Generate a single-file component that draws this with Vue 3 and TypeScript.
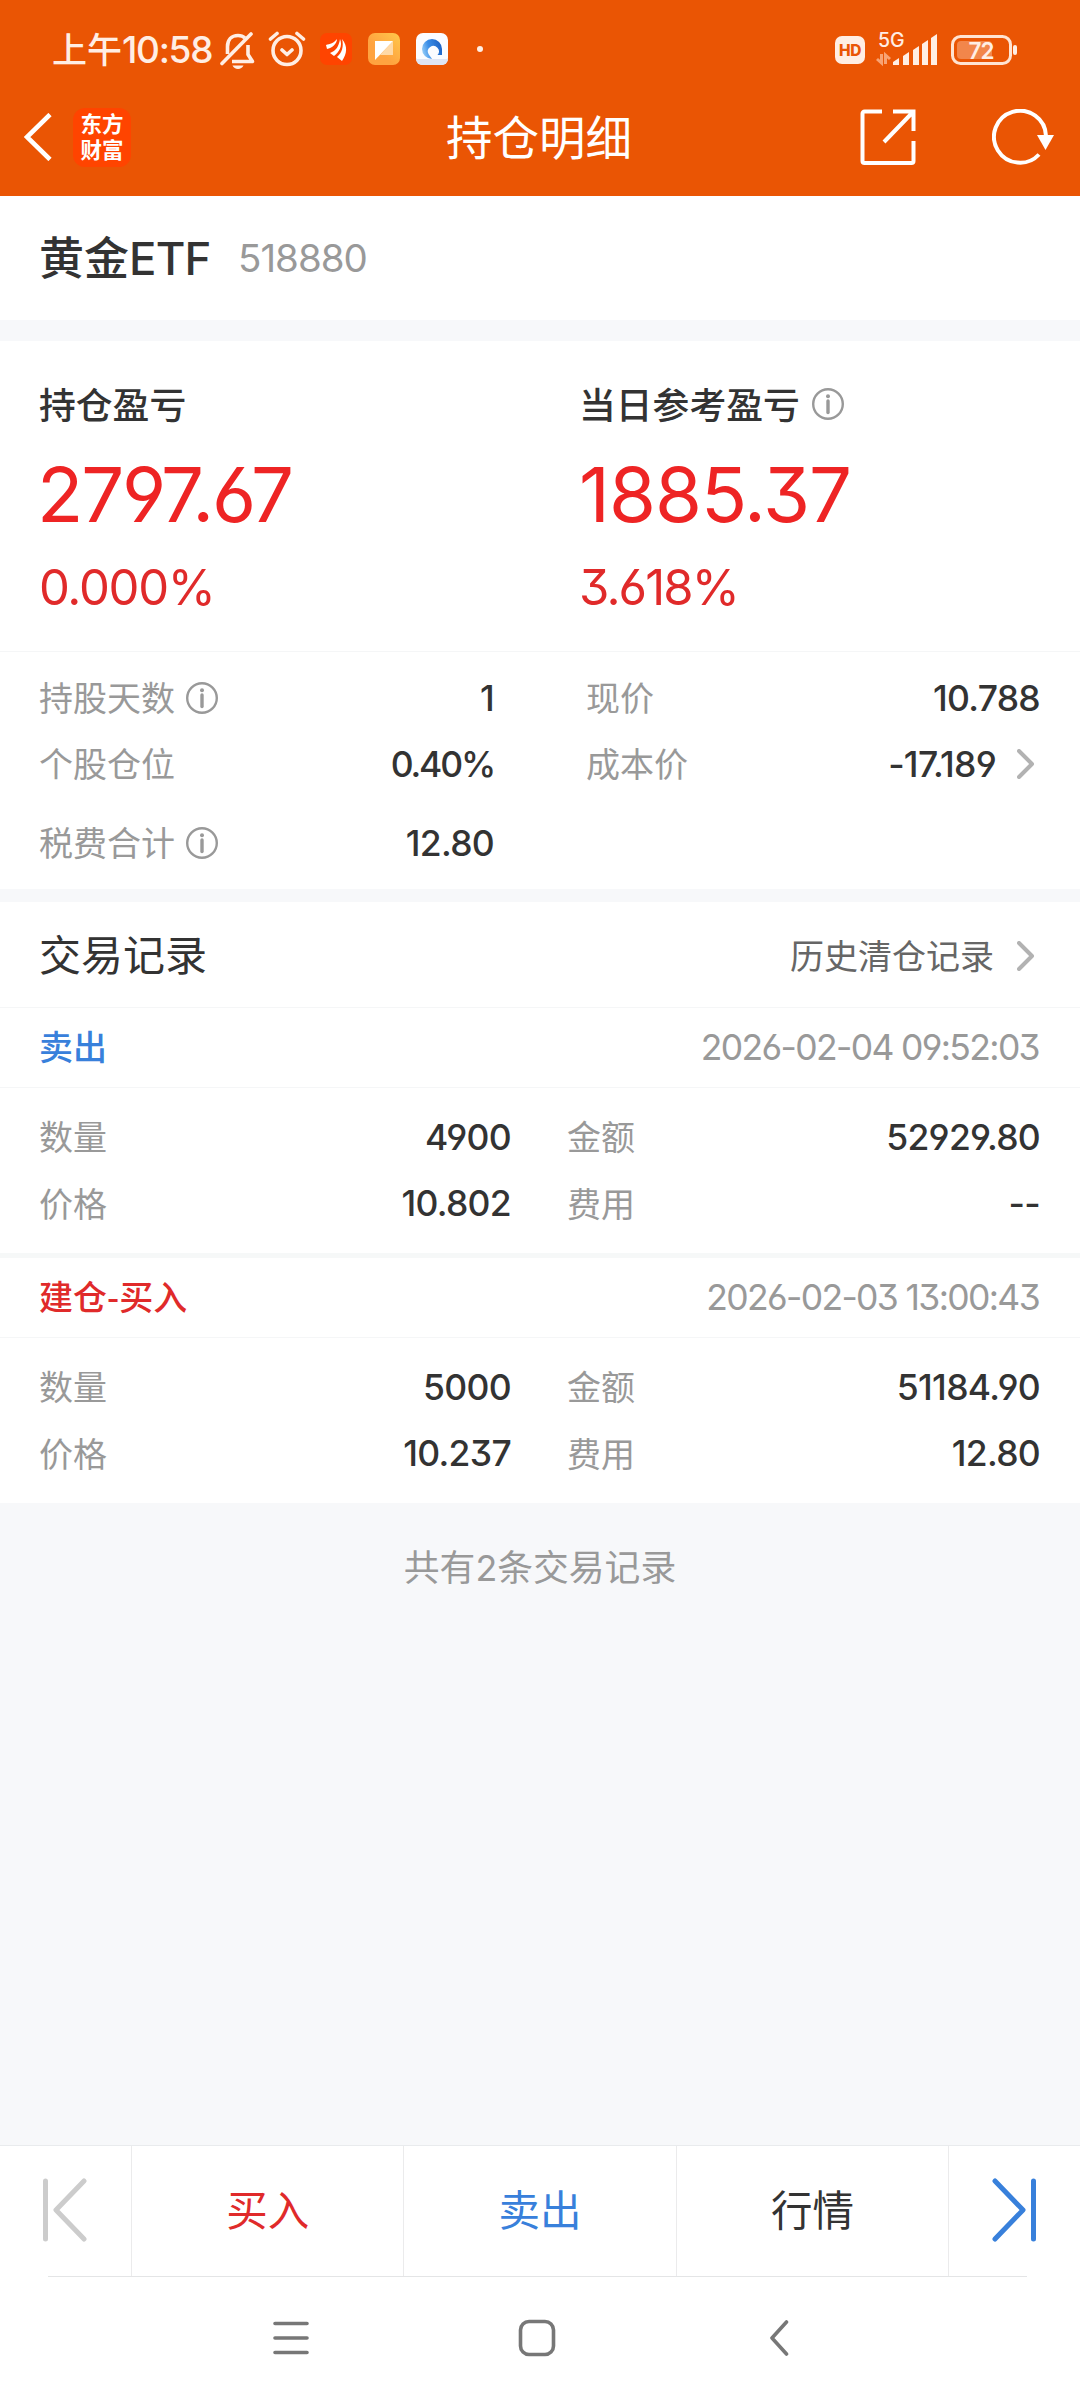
<script setup lang="ts">
interface Trade {
  kind: 'sell' | 'buy'
  title: string
  time: string
  quantity: string
  amount: string
  price: string
  fee: string
}

const trades: Trade[] = [
  { kind: 'sell', title: '卖出', time: '2026-02-04 09:52:03', quantity: '4900', amount: '52929.80', price: '10.802', fee: '--' },
  { kind: 'buy', title: '建仓-买入', time: '2026-02-03 13:00:43', quantity: '5000', amount: '51184.90', price: '10.237', fee: '12.80' },
]
</script>

<template>
  <div class="screen">
    <header class="top">
      <div class="status">
        <span class="clock">上午<span class="clock-num">10:58</span></span>
        <svg class="bell" width="36" height="38" viewBox="0 0 36 38" fill="none" stroke="#ffeee4" stroke-width="3.6">
          <path d="M7.500 22V14.500C7.500 8 11.500 3.500 18 3.500c3 0 5.400 1 7 2.500M28 13v9.500l4.500 7H12" stroke-linejoin="round" />
          <path d="M2 31.500L31 2" stroke-linecap="round" />
          <path d="M12.500 33.500h11c-1 2.300-3 3.500-5.500 3.500s-4.500-1.200-5.500-3.500z" fill="#ffeee4" stroke="none" />
        </svg>
        <svg class="alarm" width="38" height="38" viewBox="0 0 38 38" fill="none" stroke="#ffeee4" stroke-width="3.600" stroke-linecap="round" stroke-linejoin="round">
          <circle cx="19" cy="20.500" r="14" />
          <path d="M14 20l5 4.500 5-4.500M2.500 9L9 3.500M35.500 9L29 3.500" />
        </svg>
        <svg class="app" width="32" height="32" viewBox="0 0 32 32">
          <rect width="32" height="32" rx="7" fill="#ff4400" />
          <path d="M6 12c4-1 8-2 11-6 0 5-5 9-10 10zM10 20c6-2 9-7 10-14 3 7-1 13-6 17zM17 24c5-4 7-11 5-18 6 7 5 15 0 22z" fill="#fff" />
        </svg>
        <svg class="app" width="32" height="32" viewBox="0 0 32 32">
          <defs>
            <linearGradient id="note" x1="0" y1="1" x2="1" y2="0">
              <stop offset="0.400" stop-color="#ffa340" />
              <stop offset="1" stop-color="#ffc84a" />
            </linearGradient>
          </defs>
          <rect width="32" height="32" rx="7" fill="url(#note)" />
          <path d="M25 8v14H12z" fill="#ffd9a6" />
          <path d="M7 8h18L7 27z" fill="#fff" />
        </svg>
        <svg class="app" width="32" height="32" viewBox="0 0 32 32">
          <defs>
            <linearGradient id="ring" x1="0" y1="0.700" x2="1" y2="0.400">
              <stop offset="0" stop-color="#9ad0f8" />
              <stop offset="0.400" stop-color="#3b8ee8" />
              <stop offset="1" stop-color="#1d62c4" />
            </linearGradient>
          </defs>
          <rect width="32" height="32" rx="7" fill="#fbfcff" />
          <path d="M0 26h32a6 6 0 0 1-6 6H6a6 6 0 0 1-6-6z" fill="#dfe5f4" />
          <path d="M16 26A10 10 0 1 1 26 16v6h-4.500a5.500 5.500 0 1 0-9-1c1 2 2.500 3 3.500 5z" fill="url(#ring)" />
        </svg>
        <i class="dot"></i>
        <span class="hd">HD</span>
        <svg class="signal" width="64" height="36" viewBox="0 0 64 36">
          <text x="3" y="16" class="net">5G</text>
          <g fill="none" stroke="#f8a373" stroke-width="3">
            <path d="M6.500 23v9L2 28M10.500 33v-9l4.500 4" />
          </g>
          <path d="M18 34v-3l6-4v7zM28 34V25l6-4v13zM38 34V19l6-4v19zM47 34V13l6-4v25zM56 34V7l6-4v31z" fill="#ffeee4" />
        </svg>
        <svg class="battery" width="68" height="30" viewBox="0 0 68 30">
          <rect x="1.500" y="1.500" width="58" height="27" rx="8" fill="none" stroke="#ffe3d1" stroke-width="3" />
          <rect x="6" y="6" width="35" height="18" rx="4" fill="#f2864b" />
          <rect x="62" y="10" width="4" height="10" rx="2" fill="#ffeee4" />
          <text x="30" y="23.500" text-anchor="middle" class="level">72</text>
        </svg>
      </div>
      <div class="nav">
        <svg class="back" width="28" height="48" viewBox="0 0 28 48" fill="none" stroke="#fff" stroke-width="4.600">
          <path d="M26 1.500L3 24l23 22.500" />
        </svg>
        <div class="logo"><span>东方</span><span>财富</span></div>
        <h1>持仓明细</h1>
        <svg class="share" width="56" height="56" viewBox="0 0 56 56" fill="none" stroke="#fff" stroke-width="4">
          <path d="M22 2.500H4.500a2 2 0 0 0-2 2V52a2 2 0 0 0 2 2h47a2 2 0 0 0 2-2V32M33 2.500h20.500V22M53 3L24 33" />
        </svg>
        <svg class="refresh" width="62" height="56" viewBox="0 0 62 56" fill="none" stroke="#fff" stroke-width="4">
          <path d="M54 27A26 26 0 1 0 47 45.500" />
          <path d="M45 26h17l-8.500 15z" fill="#fff" stroke="none" />
        </svg>
      </div>
    </header>

    <section class="stock">
      <span class="name">黄金<span class="num">ETF</span></span>
      <span class="code num">518880</span>
    </section>

    <section class="profit">
      <div class="cell">
        <div class="caption">持仓盈亏</div>
        <div class="big num tight">2797.67</div>
        <div class="pct num">0.000%</div>
      </div>
      <div class="cell">
        <div class="caption">
          当日参考盈亏
          <svg class="info" width="32" height="32" viewBox="0 0 32 32"><circle cx="16" cy="16" r="14.800" /><circle class="pt" cx="16" cy="8.200" r="2" /><path d="M16 13v11.500" /></svg>
        </div>
        <div class="big num">1885.37</div>
        <div class="pct num day">3.618%</div>
      </div>
    </section>

    <section class="facts">
      <div class="col left">
        <div class="row">
          <label>持股天数</label>
          <svg class="info" width="32" height="32" viewBox="0 0 32 32"><circle cx="16" cy="16" r="14.800" /><circle class="pt" cx="16" cy="8.200" r="2" /><path d="M16 13v11.500" /></svg>
          <b class="num">1</b>
        </div>
        <div class="row"><label>个股仓位</label><b class="num ratio">0.40%</b></div>
        <div class="row last">
          <label>税费合计</label>
          <svg class="info" width="32" height="32" viewBox="0 0 32 32"><circle cx="16" cy="16" r="14.800" /><circle class="pt" cx="16" cy="8.200" r="2" /><path d="M16 13v11.500" /></svg>
          <b class="num">12.80</b>
        </div>
      </div>
      <div class="col right">
        <div class="row"><label>现价</label><b class="num">10.788</b></div>
        <div class="row">
          <label>成本价</label><b class="num">-17.189</b>
          <svg class="more" width="18" height="30" viewBox="0 0 18 30"><path d="M2 2l13 13L2 28" /></svg>
        </div>
      </div>
    </section>

    <section class="records">
      <div class="head">
        <h2>交易记录</h2>
        <a>历史清仓记录</a>
        <svg class="more" width="18" height="30" viewBox="0 0 18 30"><path d="M2 2l13 13L2 28" /></svg>
      </div>
      <article v-for="t in trades" :key="t.time">
        <div class="trade-title" :class="t.kind">
          <strong>{{ t.title }}</strong>
          <time class="num">{{ t.time }}</time>
        </div>
        <div class="grid">
          <div class="row"><label>数量</label><b class="num">{{ t.quantity }}</b></div>
          <div class="row"><label>金额</label><b class="num">{{ t.amount }}</b></div>
          <div class="row"><label>价格</label><b class="num">{{ t.price }}</b></div>
          <div class="row"><label>费用</label><b class="num">{{ t.fee }}</b></div>
        </div>
      </article>
    </section>

    <p class="total">共有<span class="num">2</span>条交易记录</p>

    <footer>
      <div class="actions">
        <div class="edge">
          <svg width="44" height="64" viewBox="0 0 44 64" stroke="#ccc"><path d="M2.500 3v58M41 3L13 32l28 29" /></svg>
        </div>
        <div class="act buy">买入</div>
        <div class="act sell">卖出</div>
        <div class="act">行情</div>
        <div class="edge end">
          <svg width="44" height="64" viewBox="0 0 44 64" stroke="#3880db"><path d="M41.500 3v58M3 3l28 29L3 61" /></svg>
        </div>
      </div>
      <div class="system">
        <svg width="36" height="36" viewBox="0 0 36 36"><path d="M2 3.500h32M2 18h32M2 32.500h32" /></svg>
        <svg width="38" height="38" viewBox="0 0 38 38"><rect x="2.500" y="2.500" width="33" height="33" rx="8.500" /></svg>
        <svg width="20" height="36" viewBox="0 0 20 36"><path d="M17.500 2L3 18l14.500 16" /></svg>
      </div>
    </footer>
  </div>
</template>

<style>
body {
  margin: 0;
  background: #f7f8fa;
}
</style>

<style scoped>
.screen {
  width: 1080px;
  height: 2400px;
  display: flex;
  flex-direction: column;
  background: #f7f8fa;
  color: #333;
  font-family: "Noto Sans CJK SC", sans-serif;
  overflow: hidden;
}
.screen svg {
  display: block;
  flex: none;
}
.num {
  font-family: Inter, "Noto Sans CJK SC", sans-serif;
  font-feature-settings: "cv03", "cv04", "cv09";
  white-space: nowrap;
}
.top {
  height: 196px;
  flex: none;
  background: #ea5504;
  color: #fff;
}
.status {
  height: 98px;
  display: flex;
  align-items: center;
}
.clock {
  width: 168px;
  margin-left: 52px;
  font-size: 35px;
  font-weight: 500;
  line-height: 50px;
  color: #ffeee4;
  white-space: nowrap;
}
.clock-num {
  font-family: Inter, sans-serif;
  font-size: 37px;
  letter-spacing: -1.300px;
}
.bell { margin-top: 3px; }
.alarm { margin-left: 12px; }
.app { margin-left: 16px; }
.alarm + .app { margin-left: 14px; }
.dot {
  width: 6px;
  height: 6px;
  margin-left: 29px;
  border-radius: 50%;
  background: #ffeee4;
}
.hd {
  width: 30px;
  height: 28px;
  margin: 2px 0 0 352px;
  border-radius: 7px;
  background: #ffeee4;
  color: #ea5504;
  font: 800 15.500px/29px Inter, sans-serif;
  text-align: center;
  letter-spacing: -0.300px;
}
.signal {
  margin-left: 10px;
  overflow: visible;
}
.net {
  font: 500 19.500px Inter, sans-serif;
  fill: #ffeee4;
}
.battery { margin: 2px 0 0 12px; }
.level {
  font: 600 22.500px Inter, sans-serif;
  fill: #ffeee4;
  letter-spacing: -1px;
}
.nav {
  height: 78px;
  display: flex;
  align-items: center;
}
.back { margin-left: 24px; }
.logo {
  width: 58px;
  height: 59px;
  margin-left: 21px;
  padding-bottom: 2px;
  box-sizing: border-box;
  display: flex;
  flex-direction: column;
  justify-content: center;
  align-items: center;
  border-radius: 12px;
  background: #ff4400;
  font-size: 21.500px;
  line-height: 26px;
  font-weight: 700;
}
h1 {
  margin: 0 0 0 315px;
  width: 414px;
  padding-bottom: 5px;
  font-size: 46.500px;
  font-weight: 400;
  line-height: 60px;
}
.refresh { margin-left: 76px; }
.stock {
  height: 124px;
  flex: none;
  display: flex;
  align-items: center;
  padding-left: 39px;
  background: #fff;
}
.name {
  width: 199px;
  padding-bottom: 2px;
  font-size: 45px;
  font-weight: 500;
  line-height: 60px;
}
.name .num {
  font-size: 45.500px;
  letter-spacing: -0.800px;
}
.code {
  font-size: 38.500px;
  letter-spacing: -1px;
  line-height: 60px;
  color: #999;
}
.profit {
  height: 310px;
  flex: none;
  display: flex;
  margin-top: 21px;
  border-bottom: 1px solid #f5f6f7;
  background: #fff;
}
.cell {
  width: 540px;
  box-sizing: border-box;
  padding: 38px 0 0 39px;
}
.caption {
  height: 50px;
  box-sizing: border-box;
  padding-bottom: 3px;
  display: flex;
  align-items: center;
  gap: 12px;
  font-size: 36.800px;
  font-weight: 500;
}
.caption .info { margin-top: 3px; }
.info {
  fill: none;
  stroke: #999;
  stroke-width: 2.400;
  stroke-linecap: round;
}
.info path { stroke-width: 3.400; }
.info .pt {
  fill: #999;
  stroke: none;
}
.big {
  height: 90px;
  margin-top: 20px;
  line-height: 90px;
  font-size: 76px;
  letter-spacing: -1px;
  color: #ee2424;
}
.big.tight {
  margin-left: -2px;
  letter-spacing: -2.200px;
}
.pct {
  height: 60px;
  margin-top: 19px;
  line-height: 60px;
  font-size: 49px;
  letter-spacing: -1.300px;
  color: #e02a2a;
}
.pct.day { letter-spacing: -1.900px; }
.facts {
  height: 237px;
  flex: none;
  display: flex;
  background: #fff;
}
.col {
  box-sizing: border-box;
  padding-top: 13px;
}
.left {
  width: 494px;
  padding-left: 39px;
}
.right {
  width: 546px;
  padding-left: 92px;
}
.row {
  height: 66px;
  display: flex;
  align-items: center;
}
.row.last { margin-top: 13px; }
label {
  padding-bottom: 3px;
  font-size: 34px;
  color: #999;
}
.row .info { margin-left: 11px; }
b {
  margin-left: auto;
  font-size: 35.500px;
  font-weight: 500;
  letter-spacing: -0.700px;
}
b.ratio { letter-spacing: -2.200px; }
.more {
  fill: none;
  stroke: #b2b2b2;
  stroke-width: 4;
  stroke-linecap: round;
  stroke-linejoin: round;
  margin-left: 21px;
  margin-right: 5px;
}
.records {
  margin-top: 13px;
  flex: none;
  background: #fff;
}
.head {
  height: 105px;
  display: flex;
  align-items: center;
  padding: 0 40px 0 39px;
  border-bottom: 1px solid #f5f6f7;
}
h2 {
  margin: 0;
  padding-bottom: 5px;
  font-size: 42px;
  font-weight: 400;
}
.head a {
  margin-left: auto;
  font-size: 34px;
  color: #666;
}
.head .more {
  margin-left: 23px;
  margin-top: 3px;
}
article + article { border-top: 5px solid #f6f8f8; }
.trade-title {
  height: 79px;
  display: flex;
  align-items: center;
  padding: 0 41px 0 39px;
  border-bottom: 1px solid #f5f6f7;
}
.trade-title strong {
  padding-bottom: 4px;
  font-size: 34px;
  font-weight: 500;
}
.sell { color: #3880db; }
.buy { color: #e02a2a; }
time {
  margin-left: auto;
  font-size: 35.500px;
  letter-spacing: -1.650px;
  color: #999;
}
.grid {
  display: grid;
  grid-template-columns: 472px 473px;
  column-gap: 56px;
  padding: 16px 40px 16px 39px;
}
.grid .row { height: 66.500px; }
.total {
  margin: 0;
  height: 124px;
  line-height: 124px;
  font-size: 35.800px;
  text-align: center;
  color: #999;
}
footer {
  margin-top: auto;
  height: 255px;
  background: #fff;
}
.actions {
  height: 131px;
  display: flex;
  border-top: 1px solid #e9ebed;
  background: linear-gradient(#e4e5e6, #e4e5e6) 48px 130px / 979px 1px no-repeat;
}
.actions svg {
  fill: none;
  stroke-width: 5;
  stroke-linecap: round;
  stroke-linejoin: round;
}
.edge {
  width: 131px;
  height: 130px;
  box-sizing: border-box;
  display: flex;
  align-items: center;
  padding: 0 0 3px 43px;
}
.act {
  width: 272.400px;
  box-sizing: border-box;
  height: 130px;
  line-height: 125px;
  border-left: 1px solid #ebebec;
  text-align: center;
  font-size: 41.500px;
}
.end { border-left: 1px solid #ebebec; }
.system {
  height: 123px;
  display: flex;
  align-items: center;
  padding: 0 0 2px 273px;
  box-sizing: border-box;
}
.system svg {
  fill: none;
  stroke: #777;
  stroke-width: 3.600;
  stroke-linecap: round;
  stroke-linejoin: round;
}
.system svg:nth-child(2) { margin-left: 209px; }
.system svg:nth-child(3) { margin-left: 213px; }
</style>
